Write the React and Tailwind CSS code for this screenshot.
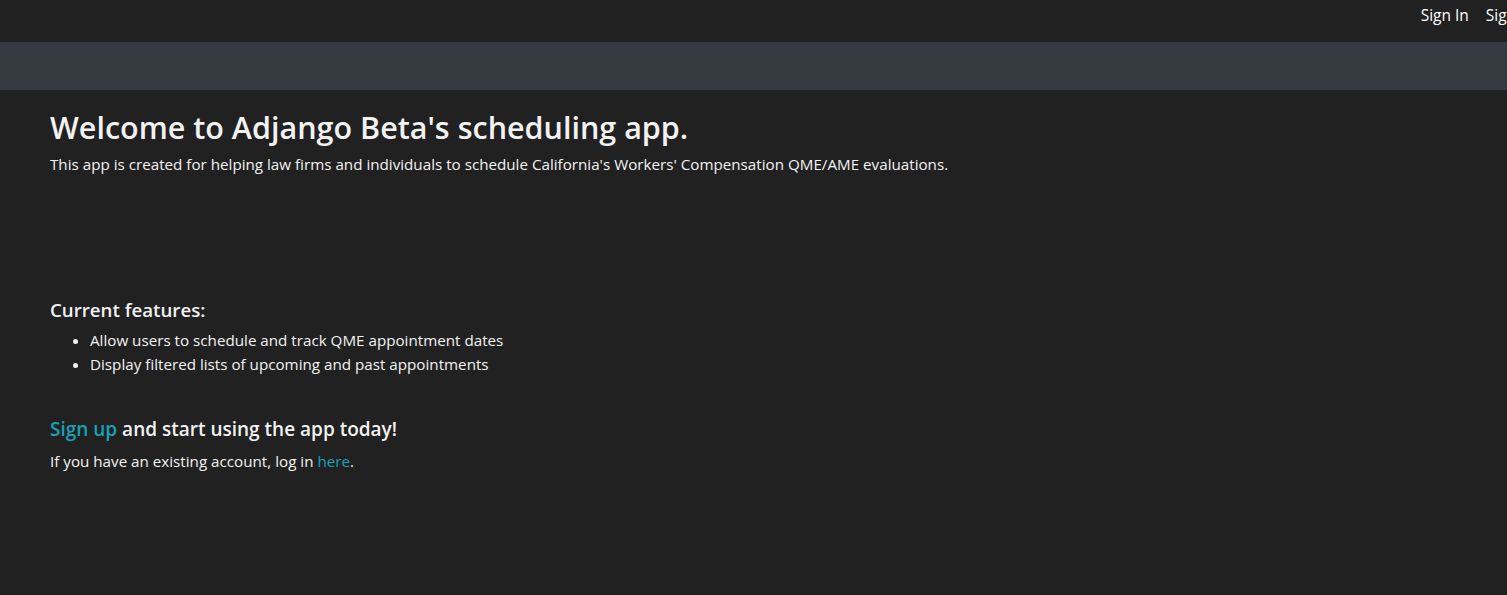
const App = () => {
    return (
        <div className="min-h-[595px] bg-[#212121] text-[#f2f2f2]">
            <div className="font-['Open_Sans',sans-serif]">
                <nav className="h-[42px] bg-[#212121] flex justify-end items-start pt-[4px] overflow-hidden">
                    <div className="flex items-center gap-[17px] text-[15.5px] leading-[22px] translate-x-[34px] whitespace-nowrap">
                        <a className="text-white">Sign In</a>
                        <a className="text-white">Sign Up</a>
                    </div>
                </nav>
                <div className="h-[48px] bg-[#343a40]"></div>
                <main className="px-[50px] pt-[18px]">
                    <h1 className="text-[30.5px] font-semibold leading-[38px]">Welcome to Adjango Beta's scheduling app.</h1>
                    <p className="text-[15.2px] leading-[24px] mt-[6px]">
                        This app is created for helping law firms and individuals to schedule California's Workers' Compensation QME/AME evaluations.
                    </p>
                    <h5 className="text-[18.7px] font-semibold leading-[24px] mt-[122px]">Current features:</h5>
                    <ul className="list-disc pl-[40px] mt-[6px] text-[15.2px] leading-[24px]">
                        <li>Allow users to schedule and track QME appointment dates</li>
                        <li>Display filtered lists of upcoming and past appointments</li>
                    </ul>
                    <h5 className="text-[19px] font-semibold leading-[24px] mt-[41px]">
                        <a className="text-[#17a2b8]">Sign up</a> and start using the app today!
                    </h5>
                    <p className="text-[15.2px] leading-[24px] mt-[8px]">
                        If you have an existing account, log in <a className="text-[#17a2b8]">here</a>.
                    </p>
                </main>
            </div>
        </div>
    );
};

export default App;
